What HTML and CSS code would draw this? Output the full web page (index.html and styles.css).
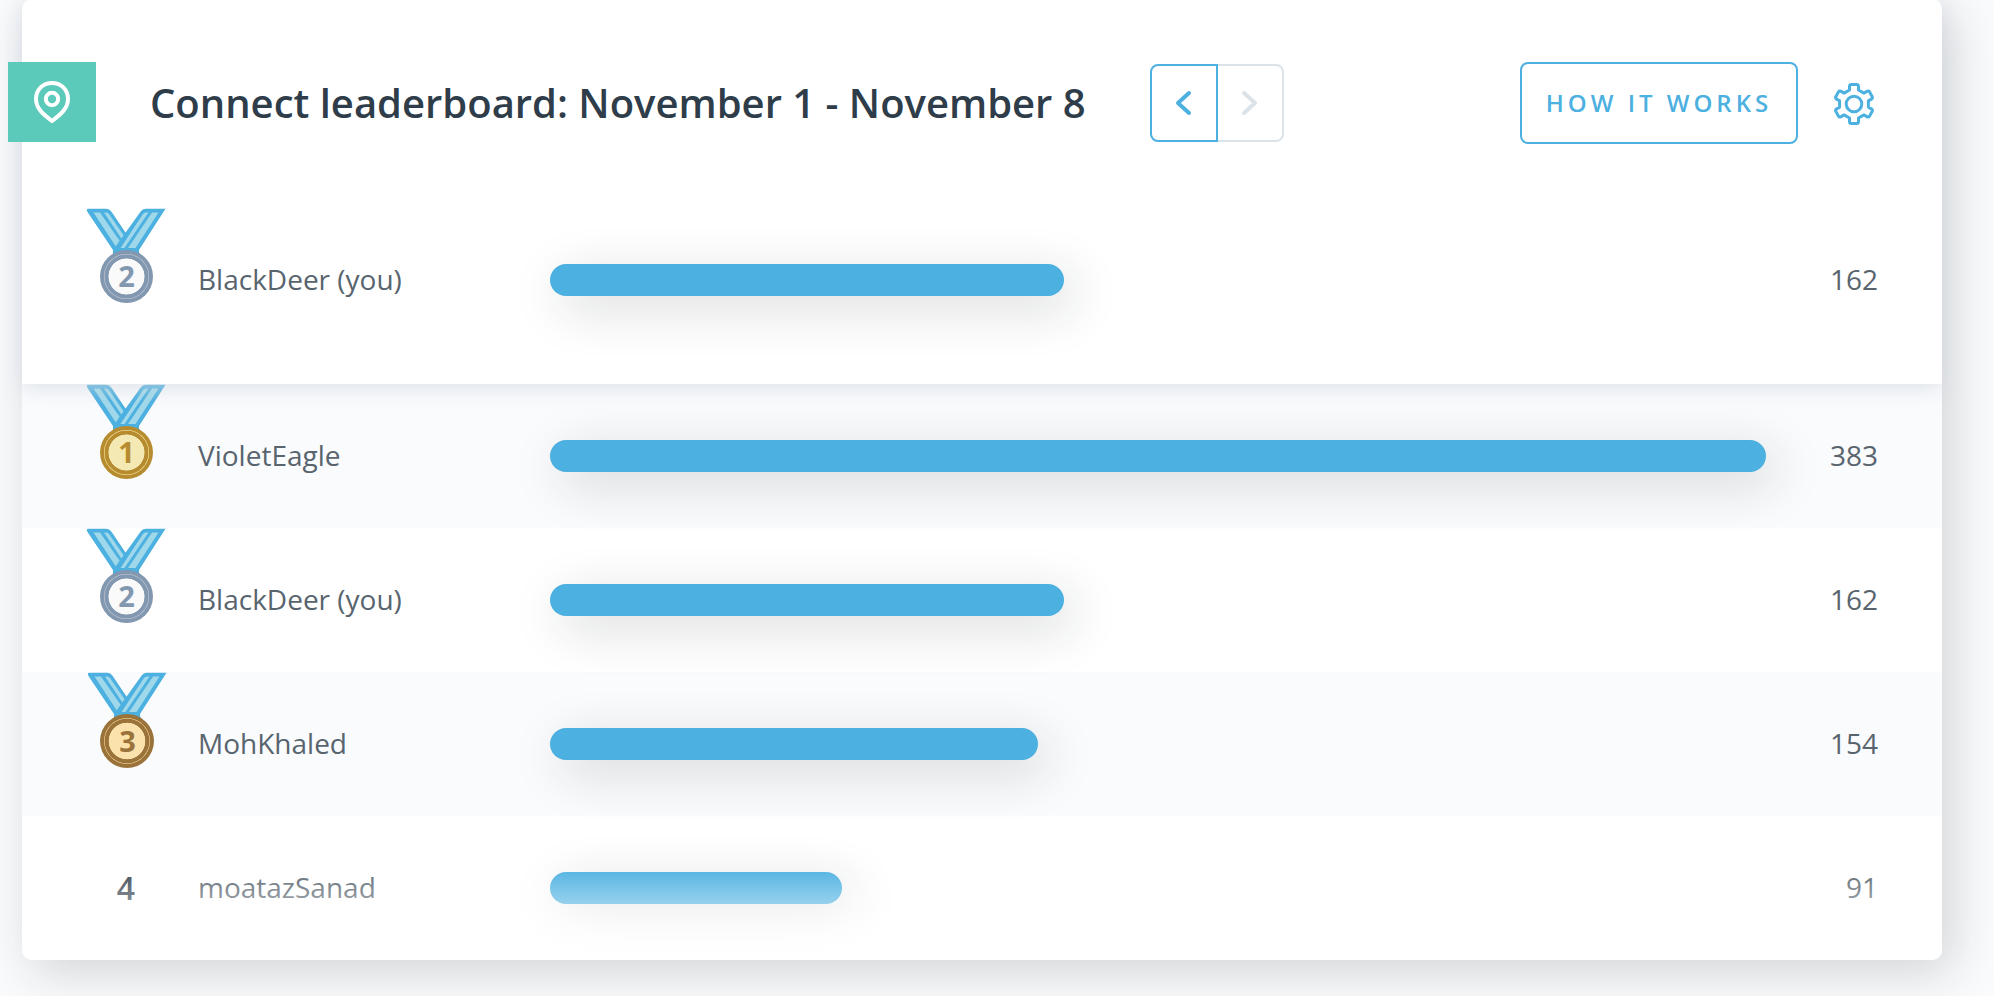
FILE: index.html
```html
<!DOCTYPE html>
<html lang="en">
<head>
<meta charset="utf-8">
<title>Connect leaderboard</title>
<link rel="stylesheet" href="styles.css">
</head>
<body>
<svg class="defs" aria-hidden="true">
  <symbol id="ribbon" viewBox="0 0 80 48">
    <path class="band" d="M3 .7H20.500q3 0 5 3L54 46H30L27 42 1.500 4Q0 1 2 .7Z"/>
    <path class="stripe" d="M7.500 4.500H14L35.500 35.500 32.500 39.500H30.500ZM18 4.500H20q2 0 3 1.500L39.500 30 37 33Z"/>
    <path class="band" d="M79.500 .7H59.500q-3 0-5 3L27 42v6H53V42Z"/>
    <path class="stripe" d="M72.500 4.500H66L42 40H49.500ZM62.500 4.500H60q-2 0-3 1.500L34.500 40H38.500Z"/>
  </symbol>
</svg>
<main class="card">
  <section class="pinned">
    <header class="header">
      <div class="tile">
        <svg class="pin" viewBox="0 0 36 42"><path d="M18 2C8.500 2 2 9 2 18c0 9.500 7.500 15.500 16 22 8.500-6.500 16-12.500 16-22C34 9 27.500 2 18 2Z"/><circle cx="18" cy="18" r="6.200"/></svg>
      </div>
      <h1 class="title">Connect leaderboard: November 1 - November 8</h1>
      <nav class="pager">
        <button class="page prev" aria-label="Previous"><svg viewBox="0 0 18 26"><path d="M14 3 3 13l11 10"/></svg></button>
        <button class="page next" aria-label="Next"><svg viewBox="0 0 18 26"><path d="m3 3 11 10L3 23"/></svg></button>
      </nav>
      <button class="how">HOW IT WORKS</button>
      <svg class="gear" viewBox="0 0 42 44"><path d="M16.500 8V4.500Q16.500 2.500 18.500 2.500H23.500Q25.500 2.500 25.500 4.500V8L30.900 11.100 33.900 9.400Q35.600 8.400 36.600 10.100L39.100 14.400Q40.100 16.150 38.400 17.100L35.400 18.900V25.100L38.400 26.900Q40.100 27.850 39.100 29.600L36.600 33.900Q35.600 35.600 33.900 34.600L30.900 32.900 25.500 36V39.500Q25.500 41.500 23.500 41.500H18.500Q16.500 41.500 16.500 39.500V36L11.100 32.900 8.100 34.600Q6.400 35.600 5.400 33.900L2.900 29.600Q1.900 27.850 3.600 26.900L6.600 25.100V18.900L3.600 17.100Q1.900 16.150 2.900 14.400L5.400 10.100Q6.400 8.400 8.100 9.400L11.100 11.100Z"/><circle cx="21" cy="22" r="7.800"/></svg>
    </header>
    <div class="row">
      <div class="rank silver"><svg class="ribbon"><use href="#ribbon"/></svg><span class="medal">2</span></div>
      <div class="name">BlackDeer (you)</div>
      <div class="track"><div class="bar" style="width:514px"></div></div>
      <div class="score">162</div>
    </div>
  </section>
  <section class="list">
    <div class="row odd">
      <div class="rank gold"><svg class="ribbon"><use href="#ribbon"/></svg><span class="medal">1</span></div>
      <div class="name">VioletEagle</div>
      <div class="track"><div class="bar" style="width:1216px"></div></div>
      <div class="score">383</div>
    </div>
    <div class="row">
      <div class="rank silver"><svg class="ribbon"><use href="#ribbon"/></svg><span class="medal">2</span></div>
      <div class="name">BlackDeer (you)</div>
      <div class="track"><div class="bar" style="width:514px"></div></div>
      <div class="score">162</div>
    </div>
    <div class="row odd">
      <div class="rank bronze"><svg class="ribbon"><use href="#ribbon"/></svg><span class="medal">3</span></div>
      <div class="name">MohKhaled</div>
      <div class="track"><div class="bar" style="width:488px"></div></div>
      <div class="score">154</div>
    </div>
    <div class="row">
      <div class="rank plain">4</div>
      <div class="name">moatazSanad</div>
      <div class="track"><div class="bar" style="width:292px"></div></div>
      <div class="score">91</div>
    </div>
  </section>
</main>
</body>
</html>
```
FILE: styles.css
```css
* { box-sizing: border-box; }
body {
  margin: 0;
  height: 996px;
  overflow: hidden;
  background: #fafbfd;
  font-family: "Open Sans", "Noto Sans", sans-serif;
  color: #58646e;
}
.defs { display: block; width: 0; height: 0; }
.card {
  width: 1920px;
  height: 962px;
  margin: -2px 0 0 22px;
  padding-top: 2px;
  border-radius: 10px;
  background: #fff;
  box-shadow: 10px 12px 50px rgba(25, 35, 35, .18);
}
.pinned {
  position: relative;
  z-index: 2;
  height: 384px;
  border-radius: 10px 10px 0 0;
  background: #fff;
  box-shadow: 0 4px 20px rgba(208, 215, 223, .7);
}
.header {
  display: flex;
  align-items: flex-start;
  height: 208px;
  padding-top: 62px;
}
.tile {
  display: flex;
  align-items: center;
  justify-content: center;
  width: 88px;
  height: 80px;
  margin-left: -14px;
  background: #5bcaba;
}
.pin { width: 36px; height: 42px; fill: none; stroke: #fff; stroke-width: 4; }
.title {
  width: 944px;
  margin: 14px 0 0 54px;
  font-size: 40px;
  font-weight: 600;
  line-height: 54px;
  color: #2e3d49;
  white-space: nowrap;
}
.pager { display: flex; margin: 2px 0 0 56px; }
.page {
  display: flex;
  align-items: center;
  justify-content: center;
  height: 78px;
  padding: 0;
  border: 2px solid;
  background: #fff;
}
.page svg { width: 18px; height: 26px; fill: none; stroke: currentColor; stroke-width: 4; stroke-linecap: round; stroke-linejoin: round; }
.prev { width: 68px; border-radius: 8px 0 0 8px; color: #4cb0e0; }
.next { width: 66px; border-left: 0; border-radius: 0 8px 8px 0; color: #dbe2e8; }
.how {
  width: 278px;
  height: 82px;
  margin-left: 236px;
  padding: 0;
  border: 2px solid #4cb0e0;
  border-radius: 8px;
  background: #fff;
  color: #4cb0e0;
  font: 600 24px/32px "Open Sans", sans-serif;
  letter-spacing: 4px;
  white-space: nowrap;
}
.gear { width: 42px; height: 44px; margin: 20px 0 0 35px; fill: none; stroke: #4cb0e0; stroke-width: 3; stroke-linejoin: round; }
.list { position: relative; z-index: 1; height: 576px; border-radius: 0 0 10px 10px; overflow: hidden; }
.list::after {
  content: "";
  position: absolute;
  inset: auto 0 0;
  height: 96px;
  background: linear-gradient(rgba(255, 255, 255, 0), #fff);
}
.row {
  display: grid;
  grid-template-columns: 176px 352px 1240px 88px;
  align-items: center;
  height: 144px;
  font-size: 28px;
  line-height: 38px;
}
.odd { background: #fafbfd; }
.rank {
  display: flex;
  flex-direction: column;
  align-items: center;
  align-self: start;
  width: 80px;
  margin-left: 64px;
}
.ribbon { width: 80px; height: 48px; }
.band { fill: #4cb0e0; }
.stripe { fill: #9fd8ea; }
.medal {
  display: flex;
  align-items: center;
  justify-content: center;
  width: 53px;
  height: 53px;
  margin-top: -6px;
  padding: 0 0 1px 1px;
  border-radius: 50%;
  z-index: 1;
  font-size: 29px;
  font-weight: 700;
}
.silver .medal { color: #8297b0; background: radial-gradient(circle, #fafafa 17.700px, #8297b0 18.300px 21.700px, #a9b6c8 22px 22.600px, #8297b0 23px); }
.gold .medal { color: #b78c30; background: radial-gradient(circle, #f5e9b3 17.700px, #b78c30 18.300px 21.700px, #dfc36d 22px 22.600px, #b78c30 23px); }
.bronze .medal { width: 54px; height: 54px; color: #9a733a; background: radial-gradient(circle, #fbe2ac 18px, #9a733a 18.600px 22px, #d4ae72 22.300px 22.900px, #9a733a 23.300px); }
.bronze { width: 82px; }
.bronze .ribbon { width: 82px; }
.plain { align-self: center; font-size: 32px; font-weight: 600; color: #36434f; }
.bar {
  height: 32px;
  border-radius: 16px;
  background: #4cb0e0;
  box-shadow: 10px 12px 50px rgba(25, 35, 35, .18);
}
.name, .score { padding-bottom: 2px; }
.score { text-align: right; }
```
